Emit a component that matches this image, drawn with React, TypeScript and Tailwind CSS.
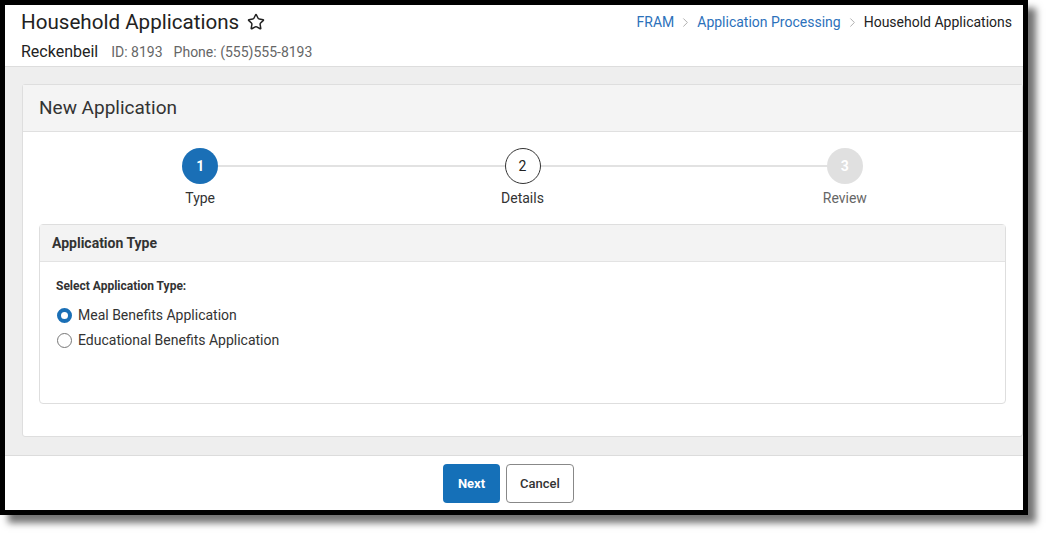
import { Star, ChevronRight } from 'lucide-react'

const steps = [
  { n: 1, label: 'Type', state: 'active' },
  { n: 2, label: 'Details', state: 'next' },
  { n: 3, label: 'Review', state: 'todo' },
]

function StepCircle({ n, state }: { n: number; state: string }) {
  if (state === 'active') {
    return (
      <div className="flex h-9 w-9 shrink-0 items-center justify-center rounded-full bg-[#1a6fb6] text-[14px] font-bold text-white">
        {n}
      </div>
    )
  }
  if (state === 'next') {
    return (
      <div className="flex h-9 w-9 shrink-0 items-center justify-center rounded-full border border-[#333] bg-white text-[14px] text-[#222]">
        {n}
      </div>
    )
  }
  return (
    <div className="flex h-9 w-9 shrink-0 items-center justify-center rounded-full bg-[#e0e0e0] text-[14px] font-bold text-white">
      {n}
    </div>
  )
}

function Stepper() {
  return (
    <div className="grid grid-cols-3">
      {steps.map((s, i) => (
        <div key={s.n} className="flex flex-col items-center">
          <div className="flex w-full items-center">
            <div className={i === 0 ? 'h-[2px] flex-1' : 'h-[2px] flex-1 bg-[#e2e2e2]'} />
            <StepCircle n={s.n} state={s.state} />
            <div className={i === steps.length - 1 ? 'h-[2px] flex-1' : 'h-[2px] flex-1 bg-[#e2e2e2]'} />
          </div>
          <div
            className={
              s.state === 'todo'
                ? 'mt-[4px] text-[14px] leading-5 text-[#666]'
                : 'mt-[4px] text-[14px] leading-5 text-[#333]'
            }
          >
            {s.label}
          </div>
        </div>
      ))}
    </div>
  )
}

function Radio({ checked, label }: { checked: boolean; label: string }) {
  return (
    <label className="flex h-[25px] items-center gap-[6px]">
      {checked ? (
        <span className="ml-[1px] h-[15px] w-[15px] rounded-full border-[4px] border-[#1a6fb6] bg-white" />
      ) : (
        <span className="ml-[1px] h-[15px] w-[15px] rounded-full border border-[#777] bg-white" />
      )}
      <span className="text-[14px] text-[#333]">{label}</span>
    </label>
  )
}

export default function App() {
  return (
    <div className="h-[540px] w-[1053px] bg-white" style={{ fontFamily: 'Roboto, "Liberation Sans", sans-serif' }}>
      <div className="flex h-[515px] w-[1028px] flex-col border-[5px] border-black bg-white shadow-[8px_8px_7px_rgba(0,0,0,0.55)]">
        {/* Page header */}
        <div className="border-b border-[#dddddd] pl-4 pr-[11px] pt-[3px] pb-[2px]">
          <div className="flex items-center justify-between">
            <div className="flex items-center gap-[8px]">
              <h1 className="text-[20.6px] leading-7 text-[#222]">Household Applications</h1>
              <Star size={18} strokeWidth={2} className="text-[#222]" />
            </div>
            <nav className="flex items-center gap-[4px] text-[14px] leading-5">
              <span className="text-[#2c71bb]">FRAM</span>
              <ChevronRight size={15} strokeWidth={1.5} className="text-[#aaa]" />
              <span className="text-[#2c71bb]">Application Processing</span>
              <ChevronRight size={15} strokeWidth={1.5} className="text-[#aaa]" />
              <span className="text-[#222]">Household Applications</span>
            </nav>
          </div>
          <div className="mt-[4px] flex items-baseline leading-6">
            <span className="text-[16px] text-[#222]">Reckenbeil</span>
            <span className="ml-[13px] text-[14px] text-[#666]">ID: 8193</span>
            <span className="ml-[11px] text-[14px] text-[#666]">Phone: (555)555-8193</span>
          </div>
        </div>

        {/* Content */}
        <div className="flex-1 border-b border-[#dcdcdc] bg-[#eeeeee] pl-[17px] pt-[17px]">
          <div className="rounded-[3px] border border-[#dedede] bg-white">
            <div className="flex h-[47px] items-center border-b border-[#e0e0e0] bg-[#f4f4f4] px-4">
              <h2 className="text-[19px] text-[#333]">New Application</h2>
            </div>
            <div className="px-4 pt-[16px] pb-[32px]">
              <Stepper />
              <div className="mt-[16px] rounded-[4px] border border-[#dedede]">
                <div className="flex h-[37px] items-center border-b border-[#e3e3e3] bg-[#f3f3f3] px-[12px]">
                  <span className="text-[14px] font-bold text-[#333]">Application Type</span>
                </div>
                <div className="px-[16px] pt-[16px] pb-[50px]">
                  <div className="text-[12px] font-bold leading-4 text-[#333]">Select Application Type:</div>
                  <div className="mt-[9px] flex flex-col">
                    <Radio checked label="Meal Benefits Application" />
                    <Radio checked={false} label="Educational Benefits Application" />
                  </div>
                </div>
              </div>
            </div>
          </div>
        </div>

        {/* Footer */}
        <div className="flex h-[54px] justify-center gap-[6px] pt-[8px] pr-[11px]">
          <button className="h-[39px] w-[57px] rounded-[4px] bg-[#1570b8] text-[13px] font-bold text-white">
            Next
          </button>
          <button className="h-[39px] w-[68px] rounded-[4px] border border-[#888] bg-white text-[13px] font-medium text-[#333]">
            Cancel
          </button>
        </div>
      </div>
    </div>
  )
}
